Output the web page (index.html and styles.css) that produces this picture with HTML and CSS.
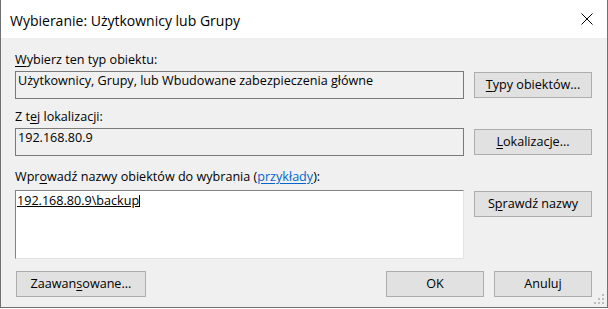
FILE: index.html
```html
<!DOCTYPE html>
<html lang="pl">
<head>
<meta charset="utf-8">
<title>Wybieranie: Użytkownicy lub Grupy</title>
<link rel="stylesheet" href="styles.css">
</head>
<body>
<div class="window">
  <div class="titlebar">
    <span class="title">Wybieranie: Użytkownicy lub Grupy</span>
    <svg class="close" width="12" height="12" viewBox="0 0 12 12"><path d="M0.5 0.5 L11.5 11.5 M11.5 0.5 L0.5 11.5" stroke="#000" stroke-width="1" fill="none"/></svg>
  </div>
  <div class="content">
    <div class="label lbl-first"><u>W</u>ybierz ten typ obiektu:</div>
    <div class="row">
      <div class="field readonly">Użytkownicy, Grupy, lub Wbudowane zabezpieczenia główne</div>
      <div class="btn btn-side"><u>T</u>ypy obiektów...</div>
    </div>
    <div class="label lbl-second">Z t<u>e</u>j lokalizacji:</div>
    <div class="row">
      <div class="field readonly">192.168.80.9</div>
      <div class="btn btn-side"><u>L</u>okalizacje...</div>
    </div>
    <div class="label lbl-third">Wpr<u>o</u>wadź nazwy obiektów do wybrania (<a class="link" href="#">przykłady</a>):</div>
    <div class="row">
      <div class="editor"><span class="resolved">192.168.80.9\backup</span><span class="caret"></span></div>
      <div class="btn btn-side">S<u>p</u>rawdź nazwy</div>
    </div>
    <div class="footer">
      <div class="btn btn-advanced">Zaawan<u>s</u>owane...</div>
      <div class="footer-right">
        <div class="btn btn-small">OK</div>
        <div class="btn btn-small">Anuluj</div>
      </div>
    </div>
  </div>
  <svg class="grip" width="12" height="12" viewBox="0 0 12 12">
    <rect x="9" y="0" width="2" height="2" fill="#bdbdbd"/>
    <rect x="5" y="4" width="2" height="2" fill="#bdbdbd"/>
    <rect x="9" y="4" width="2" height="2" fill="#bdbdbd"/>
    <rect x="1" y="8" width="2" height="2" fill="#bdbdbd"/>
    <rect x="5" y="8" width="2" height="2" fill="#bdbdbd"/>
    <rect x="9" y="8" width="2" height="2" fill="#bdbdbd"/>
  </svg>
</div>
</body>
</html>
```
FILE: styles.css
```css
* { box-sizing: border-box; }
html, body { margin: 0; padding: 0; }
body {
  width: 608px;
  height: 309px;
  overflow: hidden;
  background: #ffffff;
  font-family: "Open Sans", "Noto Sans", "Liberation Sans", sans-serif;
  font-size: 12.6px;
  color: #000;
}
u { text-decoration: underline; text-underline-offset: 2px; }

.window {
  position: relative;
  width: 608px;
  height: 308px;
  background: #f0f0f0;
  border: 1px solid #707070;
  border-top: none;
  display: flex;
  flex-direction: column;
}

.titlebar {
  height: 38px;
  flex: none;
  background: #fff;
  display: flex;
  align-items: flex-start;
  justify-content: space-between;
  padding: 11px 14px 0 9px;
}
.title {
  font-size: 14px;
  line-height: 20px;
  color: #000;
}
.close { margin-top: 2px; display: block; }

.content {
  flex: 1;
  display: flex;
  flex-direction: column;
  padding: 14px 15px 0 14px;
}

.label {
  height: 16px;
  line-height: 16px;
  white-space: nowrap;
}
.lbl-first { margin-bottom: 3px; }
.lbl-second { margin-top: 10px; margin-bottom: 3px; }
.lbl-third { margin-top: 13px; margin-bottom: 5px; }

.link { color: #0066cc; text-decoration: underline; text-underline-offset: 2px; }

.row {
  display: flex;
  gap: 10px;
  align-items: flex-start;
}

.field {
  width: 449px;
  height: 28px;
  flex: none;
  border: 1px solid #7a7a7a;
  padding: 1px 2px 0 2px;
  line-height: 16px;
  white-space: nowrap;
  overflow: hidden;
}
.readonly { background: #f0f0f0; }

.editor {
  width: 449px;
  height: 69px;
  flex: none;
  background: #fff;
  border: 1px solid;
  border-color: #828282 #e3e3e3 #e3e3e3 #828282;
  padding: 2px 1px 0 1px;
  line-height: 16px;
  display: flex;
  align-items: flex-start;
}
.resolved { text-decoration: underline; text-underline-offset: 1px; }
.caret {
  display: block;
  width: 1px;
  height: 12px;
  margin-top: 2px;
  background: #000;
}

.btn {
  height: 26px;
  flex: none;
  border: 1px solid #adadad;
  background: #e1e1e1;
  display: flex;
  align-items: center;
  justify-content: center;
  line-height: 16px;
  white-space: nowrap;
}
.btn-side { width: 118px; margin-top: 1px; }
.btn-advanced { width: 130px; margin-left: 1px; }
.btn-small { width: 98px; }

.footer {
  margin-top: 12px;
  display: flex;
  justify-content: space-between;
}
.footer-right { display: flex; gap: 10px; }

.grip {
  position: absolute;
  right: 2px;
  bottom: 1px;
}
```
